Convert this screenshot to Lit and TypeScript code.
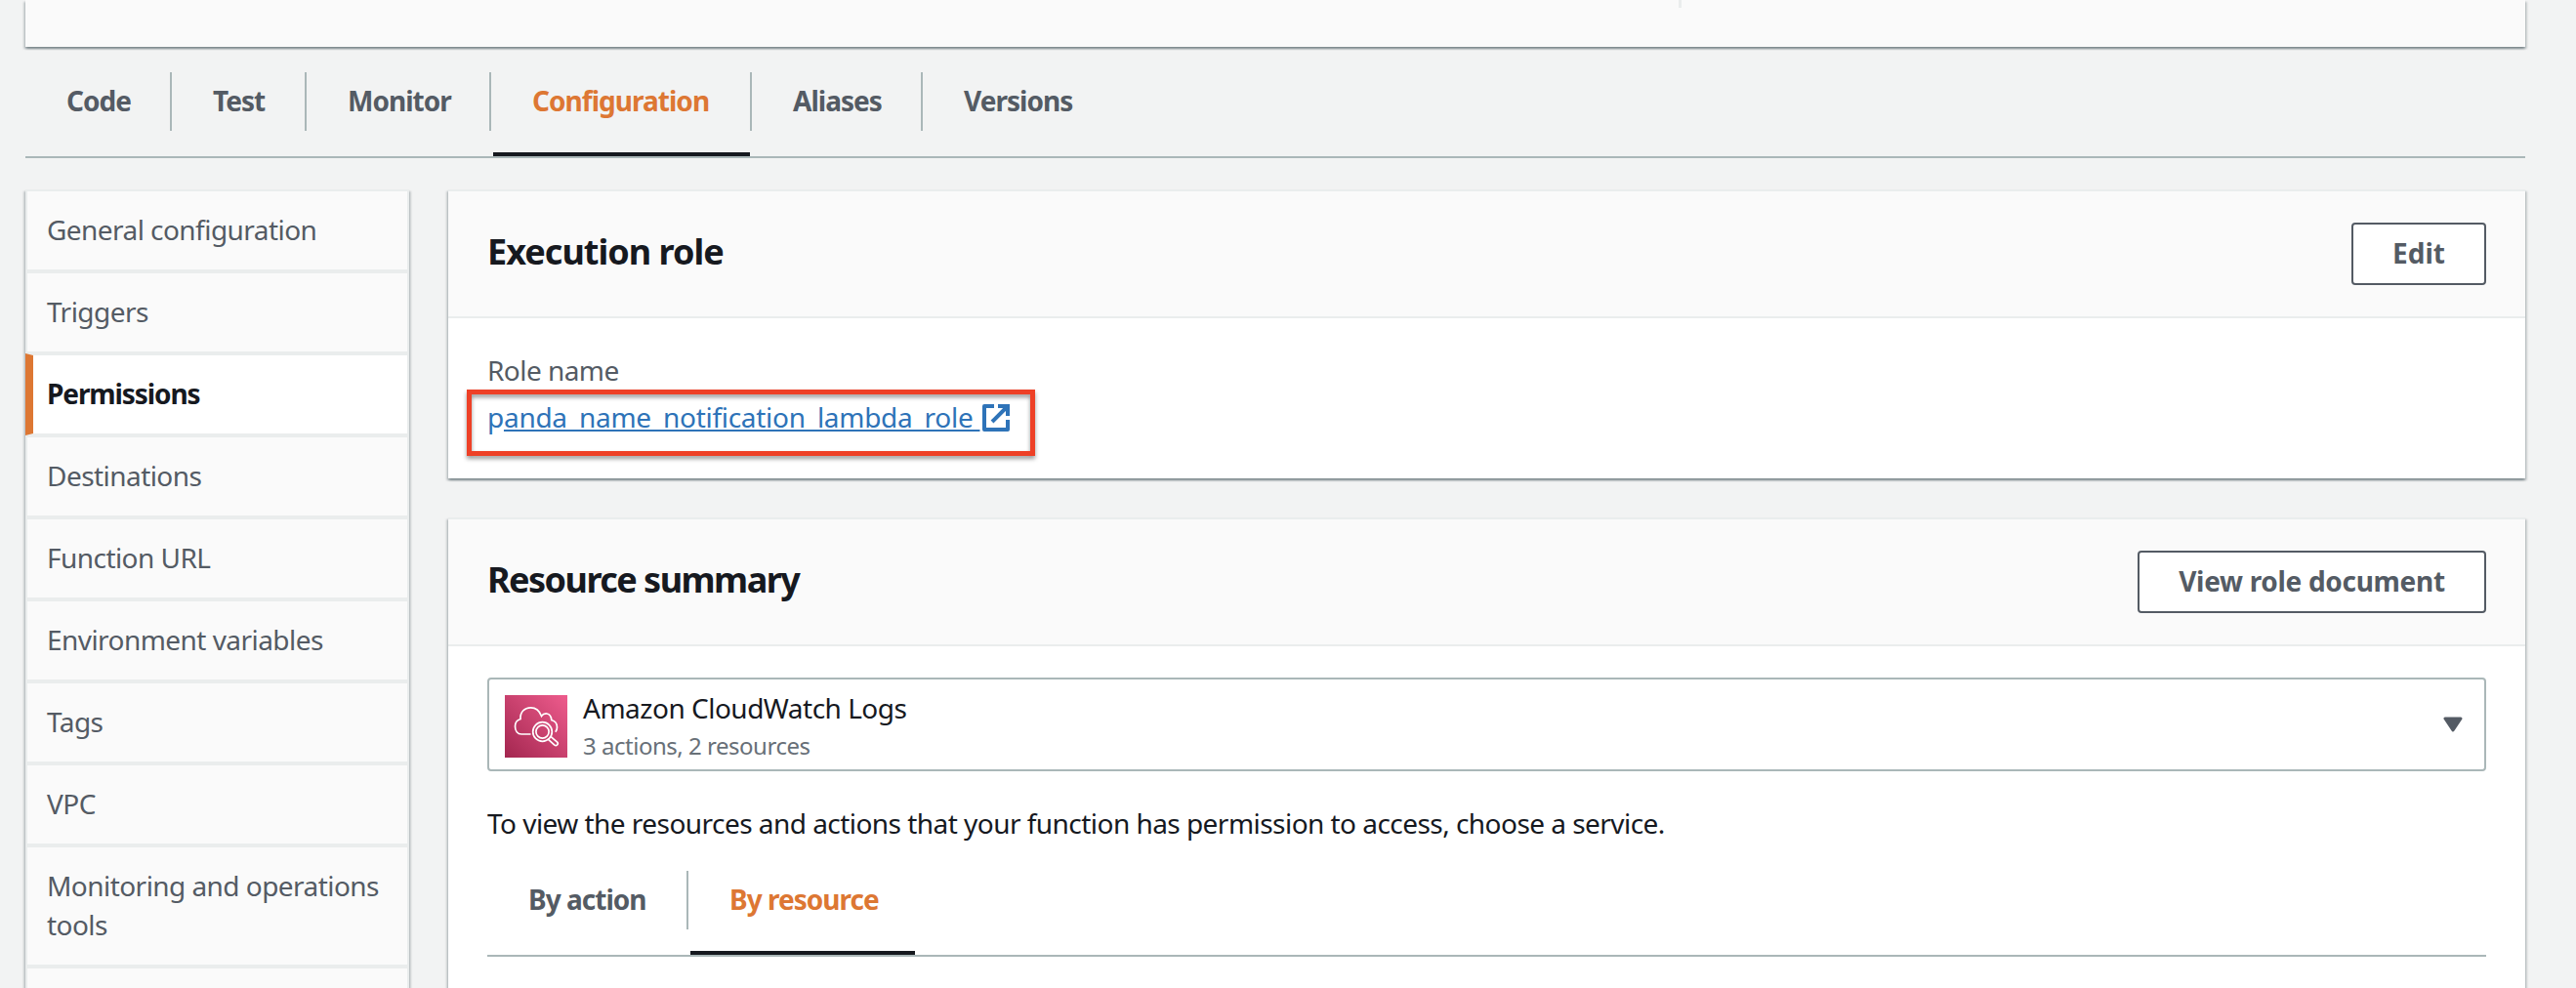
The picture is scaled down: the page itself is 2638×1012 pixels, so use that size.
import { LitElement, html, svg, css } from "lit";
import { customElement, property } from "lit/decorators.js";
import { classMap } from "lit/directives/class-map.js";

interface Tab {
  label: string;
  width: number;
  active?: boolean;
}

const MAIN_TABS: Tab[] = [
  { label: "Code", width: 150 },
  { label: "Test", width: 138 },
  { label: "Monitor", width: 189 },
  { label: "Configuration", width: 267, active: true },
  { label: "Aliases", width: 175 },
  { label: "Versions", width: 196 },
];

const SUMMARY_TABS: Tab[] = [
  { label: "By action", width: 206 },
  { label: "By resource", width: 234, active: true },
];

const SECTIONS = [
  "General configuration",
  "Triggers",
  "Permissions",
  "Destinations",
  "Function URL",
  "Environment variables",
  "Tags",
  "VPC",
  "Monitoring and operations tools",
  "",
];

const externalIcon = svg`<svg class="external" width="28" height="28" viewBox="0 0 28 28" fill="none" stroke="currentColor" stroke-width="4">
  <path d="M12 2H2v24h24V16" stroke-linejoin="round"/>
  <path d="M16 2h10v10M25 3 10 18"/>
</svg>`;

const cloudWatchIcon = svg`<svg class="service" width="64" height="64" viewBox="0 0 64 64">
  <defs>
    <linearGradient id="cw" x1="0" y1="1" x2="1" y2="0">
      <stop offset="0" stop-color="#a3264f"/>
      <stop offset="1" stop-color="#ee5c8d"/>
    </linearGradient>
  </defs>
  <rect width="64" height="64" fill="url(#cw)"/>
  <g fill="none" stroke="#fff" stroke-width="1.7">
    <path d="M26.5 45.500"/>
    <path d="M26.5 40H17C13 40 10.500 36.500 10.500 32C10.500 28.500 12.500 25.500 16 24.500C15.500 17.500 20 12.800 26.500 12.800C32 12.800 35.500 16 37.500 21.500C39 19.300 41 18.800 43 19C46 19.500 47.500 22 47.800 25.500C51.500 26.500 53.500 29.500 53.500 33C53.500 35 52.800 36.500 51.800 37.800"/>
    <circle cx="38.500" cy="37.500" r="9.800"/>
    <circle cx="38.500" cy="37.500" r="6.600"/>
    <path d="M44.500 45.300l6.300 5.700a1.900 1.900 0 0 0 2.800-2.800l-7-6"/>
  </g>
</svg>`;

@customElement("tab-strip")
class TabStrip extends LitElement {
  @property({ attribute: false }) tabs: Tab[] = [];

  static styles = css`
    :host {
      display: block;
    }
    .strip {
      display: flex;
      height: 86px;
      border-bottom: 2px solid #aab7b8;
    }
    .tab {
      box-sizing: border-box;
      display: flex;
      flex-direction: column;
      justify-content: space-between;
      color: #545b64;
      font-weight: 700;
      letter-spacing: -0.97px;
    }
    .label {
      box-sizing: border-box;
      height: 60px;
      line-height: 58px;
      padding-left: 42px;
      border-right: 2px solid #aab7b8;
      white-space: nowrap;
    }
    .tab:last-child .label {
      border-right-color: transparent;
    }
    .bar {
      height: 4px;
      margin: 0 2px;
    }
    .active {
      color: #dd7733;
    }
    .active .bar {
      background: #16191f;
    }
  `;

  render() {
    return html`<div class="strip">
      ${this.tabs.map(
        (t) => html`<div class=${classMap({ tab: true, active: !!t.active })} style="width:${t.width}px">
          <div class="label">${t.label}</div>
          <div class="bar"></div>
        </div>`
      )}
    </div>`;
  }
}

@customElement("app-root")
class AppRoot extends LitElement {
  static styles = css`
    :host {
      display: block;
      box-sizing: border-box;
      height: 1012px;
      overflow: hidden;
      padding: 0 52px 0 26px;
      background: #f2f3f3;
      color: #16191f;
      font: 28px/40px "Noto Sans", "Open Sans", sans-serif;
    }
    .card,
    .overview {
      background: #fff;
      box-shadow: 0 2px 2px 0 rgba(0, 28, 36, 0.3), 2px 2px 2px 0 rgba(0, 28, 36, 0.15),
        -2px 2px 2px 0 rgba(0, 28, 36, 0.15);
    }
    .card {
      border-top: 2px solid #eaeded;
    }
    .overview {
      height: 48px;
      background: #fafafa;
      display: flex;
    }
    .rule {
      width: 3px;
      height: 8px;
      margin-left: 1693px;
      background: #eaeded;
    }
    .main-tabs {
      padding-top: 26px;
    }
    .columns {
      display: grid;
      grid-template-columns: 393px 2127px;
      column-gap: 40px;
      align-items: start;
      margin-top: 32px;
    }
    .side {
      border-top: 0;
    }
    .item {
      box-sizing: border-box;
      min-height: 84px;
      padding: 19px 16px 21px 20px;
      border: 2px solid #eaeded;
      background: #fafafa;
      color: #545b64;
      letter-spacing: -0.55px;
    }
    .item.active {
      border-left: 8px solid #dd7733;
      padding-left: 14px;
      background: #fff;
      color: #16191f;
      font-weight: 700;
      letter-spacing: -1.1px;
    }
    .content {
      display: grid;
      row-gap: 40px;
    }
    .head {
      box-sizing: border-box;
      height: 130px;
      padding: 32px 40px 0;
      display: flex;
      justify-content: space-between;
      align-items: flex-start;
      background: #fafafa;
      border-bottom: 2px solid #eaeded;
    }
    .title {
      margin: 5px 0 0;
      font-size: 36px;
      line-height: 50px;
      font-weight: 700;
      letter-spacing: -0.98px;
    }
    .title.long {
      letter-spacing: -1.53px;
    }
    .button {
      box-sizing: border-box;
      height: 64px;
      padding: 0 40px 2px;
      border: 2px solid #545b64;
      border-radius: 4px;
      background: #fff;
      color: #545b64;
      font: inherit;
      font-weight: 700;
      line-height: 58px;
      letter-spacing: -0.3px;
      white-space: nowrap;
    }
    .button.edit {
      width: 138px;
      letter-spacing: 0;
    }
    .button.view {
      width: 357px;
    }
    .role {
      box-sizing: border-box;
      height: 164px;
      padding: 33px 40px 0;
    }
    .caption {
      color: #545b64;
      letter-spacing: -0.55px;
    }
    .link-row {
      position: relative;
      width: max-content;
      display: flex;
      align-items: flex-start;
      height: 48px;
      padding-top: 8px;
      color: #2e73b8;
    }
    .link {
      color: inherit;
      letter-spacing: -0.28px;
      white-space: pre;
      text-decoration: underline;
      text-decoration-thickness: 2px;
      text-underline-offset: 2px;
      text-decoration-skip-ink: none;
    }
    .p {
      display: inline-block;
      text-decoration: none;
    }
    .external {
      margin: 7px 0 0 3px;
    }
    .highlight {
      position: absolute;
      left: -21px;
      top: 0;
      box-sizing: border-box;
      width: 582px;
      height: 68px;
      border: 5px solid #ee4026;
      filter: drop-shadow(0 3px 2px rgba(0, 0, 0, 0.4));
    }
    .summary {
      padding: 32px 40px 60px;
    }
    .select {
      box-sizing: border-box;
      height: 96px;
      padding: 0 22px 0 16px;
      border: 2px solid #aab7b8;
      border-radius: 4px;
      display: flex;
      align-items: center;
    }
    .service {
      margin-top: 4px;
    }
    .names {
      flex: 1;
      margin: 2px 0 0 16px;
    }
    .name {
      letter-spacing: -0.5px;
    }
    .counts {
      font-size: 24px;
      line-height: 38px;
      margin-bottom: -2px;
      color: #687078;
      letter-spacing: -0.48px;
    }
    .hint {
      margin: 33px 0 29px;
      letter-spacing: -0.54px;
    }
  `;

  render() {
    return html`
      <div class="overview"><div class="rule"></div></div>
      <tab-strip class="main-tabs" .tabs=${MAIN_TABS}></tab-strip>
      <div class="columns">
        <nav class="card side">
          ${SECTIONS.map(
            (s) => html`<div class=${classMap({ item: true, active: s === "Permissions" })}>${s}</div>`
          )}
        </nav>
        <div class="content">
          <section class="card">
            <div class="head">
              <h2 class="title">Execution role</h2>
              <button class="button edit">Edit</button>
            </div>
            <div class="role">
              <div class="caption">Role name</div>
              <div class="link-row">
                <span class="link"><span class="p">p</span>anda_name_notification_lambda_role </span>${externalIcon}
                <div class="highlight"></div>
              </div>
            </div>
          </section>
          <section class="card">
            <div class="head">
              <h2 class="title long">Resource summary</h2>
              <button class="button view">View role document</button>
            </div>
            <div class="summary">
              <div class="select">
                ${cloudWatchIcon}
                <div class="names">
                  <div class="name">Amazon CloudWatch Logs</div>
                  <div class="counts">3 actions, 2 resources</div>
                </div>
                <svg width="20" height="16" viewBox="0 0 20 16">
                  <path
                    d="M2 2h16l-8 12z"
                    fill="#545b64"
                    stroke="#545b64"
                    stroke-width="3"
                    stroke-linejoin="round"
                  />
                </svg>
              </div>
              <p class="hint">
                To view the resources and actions that your function has permission to access, choose a
                service.
              </p>
              <tab-strip .tabs=${SUMMARY_TABS}></tab-strip>
            </div>
          </section>
        </div>
      </div>
    `;
  }
}
